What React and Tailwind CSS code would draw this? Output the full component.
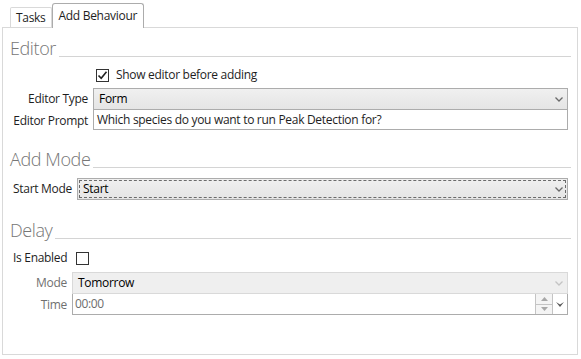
import React from 'react';

const font = { fontFamily: '"Open Sans", "Noto Sans", sans-serif', letterSpacing: '-0.3px' };

function Chevron({ className = 'text-[#5f5f5f]' }) {
  return (
    <svg width="8" height="5" viewBox="0 0 8 5" className={className}>
      <path d="M0.5 0.5 L4 4 L7.5 0.5" fill="none" stroke="currentColor" strokeWidth="1.3" />
    </svg>
  );
}

function Header({ children }) {
  return (
    <div className="flex items-end h-[22px]">
      <span className="text-[18px] leading-[22px] font-light text-[#767676] tracking-[-0.4px]">{children}</span>
      <div className="flex-1 h-px bg-[#d4d4d4] mb-[2px] ml-[3px]" />
    </div>
  );
}

function Combo({ value, focused = false, disabled = false }) {
  return (
    <div
      className={`relative flex-1 h-[22px] flex items-center border ${
        disabled
          ? 'border-[#d9d9d9] bg-[#efefef]'
          : 'border-[#acacac] bg-gradient-to-b from-[#f0f0f0] to-[#e5e5e5]'
      }`}
    >
      {focused && <div className="absolute inset-[1px] border border-dashed border-[#6b6b6b]" />}
      <span className="pl-[5px] text-[12px] text-black">{value}</span>
      <span className="ml-auto mr-[4px] flex items-center">
        <Chevron className={disabled ? 'text-[#c4c4c4]' : 'text-[#6a6a6a]'} />
      </span>
    </div>
  );
}

function CheckBox({ checked }) {
  return (
    <div className="w-[13px] h-[13px] border border-[#333333] bg-white flex items-center justify-center">
      {checked && (
        <svg width="11" height="11" viewBox="0 0 11 11">
          <path d="M1.5 5.5 L4.2 8.3 L9.5 1.8" fill="none" stroke="#222" strokeWidth="1.6" />
        </svg>
      )}
    </div>
  );
}

export default function App() {
  return (
    <div className="w-[581px] h-[359px] bg-white text-[12px] text-[#1e1e1e] overflow-hidden" style={font}>
      {/* tabs */}
      <div className="flex items-end h-[27px] pl-[10px]">
        <div className="h-[20px] px-[5px] border border-b-0 border-[#d9d9d9] rounded-t-[2px] flex items-center text-[12px] bg-white">
          Tasks
        </div>
        <div className="relative z-10 -mb-px h-[25px] px-[6px] border border-b-0 border-[#acacac] rounded-t-[3px] flex items-center bg-white text-[12px]">
          Add Behaviour
        </div>
      </div>

      {/* panel */}
      <div className="ml-[2px] w-[576px] h-[328px] border border-[#d9d9d9] bg-white pl-[7px] pr-[6px] pt-[9px]">
        <Header>Editor</Header>
        <div className="pr-[3px]">
          <div className="flex items-center h-[14px] mt-[9px] ml-[86px] gap-[7px]">
            <CheckBox checked />
            <span>Show editor before adding</span>
          </div>
          <div className="grid grid-cols-[78px_1fr] gap-x-[5px] mt-[6px]">
            <div className="h-[21px] flex items-center justify-end">Editor Type</div>
            <div className="flex"><Combo value="Form" /></div>
            <div className="h-[21px] flex items-center justify-end">Editor Prompt</div>
            <div className="h-[21px] -mt-px border border-[#acacac] bg-white flex items-center pl-[3px]">
              Which species do you want to run Peak Detection for?
            </div>
          </div>
        </div>

        <div className="mt-[17px]">
          <Header>Add Mode</Header>
        </div>
        <div className="pr-[3px] mt-[8px] flex items-center gap-[5px]">
          <div className="w-[62px] pl-[3px]">Start Mode</div>
          <Combo value="Start" focused />
        </div>

        <div className="mt-[19px]">
          <Header>Delay</Header>
        </div>
        <div className="pr-[3px] mt-[10px] flex items-center gap-[9px] h-[14px]">
          <div className="pl-[3px]">Is Enabled</div>
          <CheckBox />
        </div>
        <div className="pr-[3px] mt-[7px] grid grid-cols-[57px_1fr] gap-x-[5px]">
          <div className="h-[22px] flex items-center justify-end text-[#707070]">Mode</div>
          <div className="flex"><Combo value="Tomorrow" disabled /></div>
          <div className="h-[21px] flex items-center justify-end text-[#707070]">Time</div>
          <div className="h-[22px] -mt-px flex border border-[#acacac] bg-white">
            <div className="flex-1 flex items-center pl-[2px] text-[#6d6d6d] tracking-[-0.4px]">00:00</div>
            <div className="w-[17px] flex flex-col border-l border-[#c4c4c4]">
              <div className="flex-1 flex items-center justify-center border-b border-[#c4c4c4] bg-[#f4f4f4]">
                <svg width="7" height="4" viewBox="0 0 7 4"><path d="M0 4 L3.5 0 L7 4 Z" fill="#a8a8a8" /></svg>
              </div>
              <div className="flex-1 flex items-center justify-center bg-[#f4f4f4]">
                <svg width="7" height="4" viewBox="0 0 7 4"><path d="M0 0 L3.5 4 L7 0 Z" fill="#a8a8a8" /></svg>
              </div>
            </div>
            <div className="w-[15px] flex items-center justify-center border-l border-[#c4c4c4]">
              <svg width="8" height="5" viewBox="0 0 8 5"><path d="M0 0 L4 5 L8 0 L4 2.5 Z" fill="#555" /></svg>
            </div>
          </div>
        </div>
      </div>
    </div>
  );
}
